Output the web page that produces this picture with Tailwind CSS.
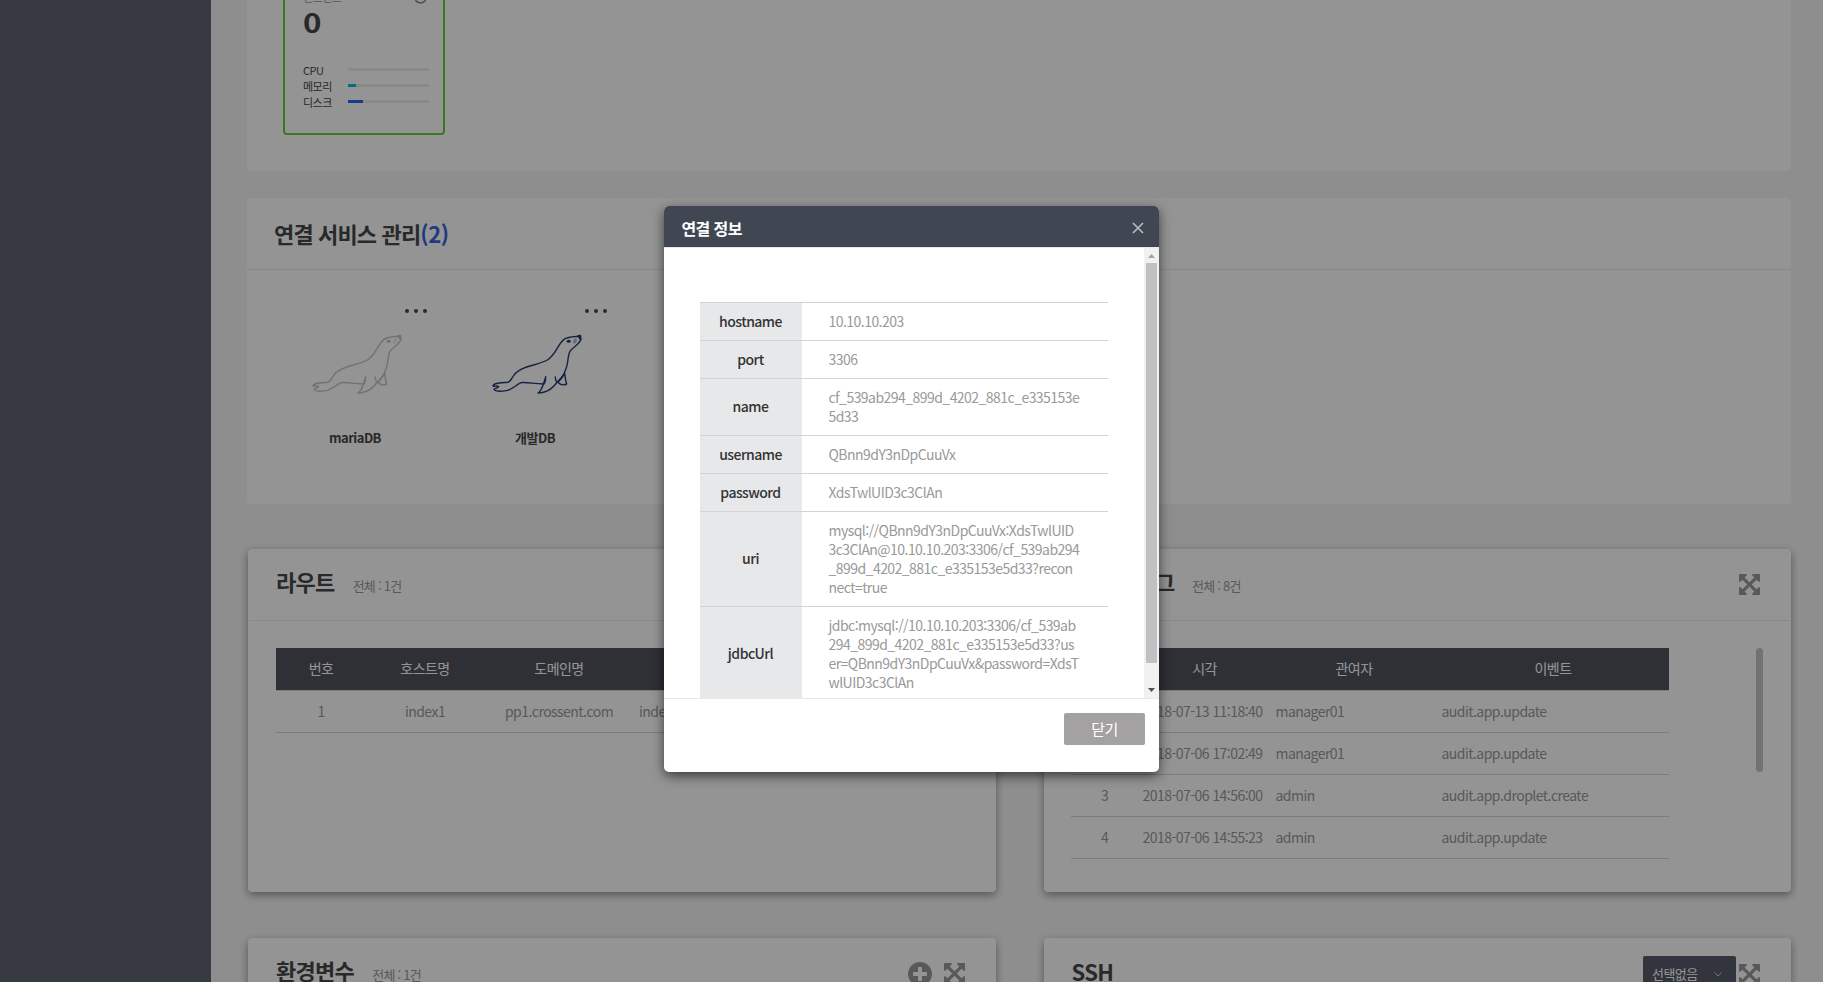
<!DOCTYPE html>
<html lang="ko">
<head>
<meta charset="utf-8">
<title>연결 정보</title>
<script src="https://cdn.jsdelivr.net/npm/@tailwindcss/browser@4"></script>
</head>
<body class="relative h-[982px] w-[1823px] overflow-hidden bg-[#f5f5f5] font-['Noto_Sans_CJK_KR',sans-serif] text-[14px] tracking-[-0.54px] text-[#484848]">
<svg class="hidden">
  <symbol id="expand" viewBox="128 128 1536 1536"><path d="M1411 541l-355 355 355 355 144-144q29-31 70-14 39 17 39 59v448q0 26-19 45t-45 19h-448q-42 0-59-40-17-39 14-69l144-144-355-355-355 355 144 144q31 30 14 69-17 40-59 40h-448q-26 0-45-19t-19-45v-448q0-42 40-59 39-17 69 14l144 144 355-355-355-355-144 144q-19 19-45 19-12 0-24-5-40-17-40-59v-448q0-26 19-45t45-19h448q42 0 59 40 17 39-14 69l-144 144 355 355 355-355-144-144q-31-30-14-69 17-40 59-40h448q26 0 45 19t19 45v448q0 42-39 59-13 5-25 5-26 0-45-19z"/></symbol>
  <symbol id="plus" viewBox="128 128 1536 1536"><path d="M1344 960v-128q0-26-19-45t-45-19h-256v-256q0-26-19-45t-45-19h-128q-26 0-45 19t-19 45v256h-256q-26 0-45 19t-19 45v128q0 26 19 45t45 19h256v256q0 26 19 45t45 19h128q26 0 45-19t19-45v-256h256q26 0 45-19t19-45zm320-64q0 209-103 385.500t-279.500 279.500-385.500 103-385.500-103-279.500-279.500-103-385.500 103-385.500 279.500-279.500 385.500-103 385.500 103 279.500 279.500 103 385.500z"/></symbol>
  <symbol id="seal" viewBox="210 160 285 186">
    <g fill="none" stroke="currentColor" stroke-width="4.200" stroke-linecap="round" stroke-linejoin="round">
      <path d="M474 170C458 171 442 171 432 179C412 195 408 225 382 241C362 252 338 256 320 262C300 269 286 279 280 289C275 297 271 305 264 308C250 309 235 309 225 313C221 315 218 317 219 319C225 321 230 317 236 321C232 327 222 326 222 330C227 336 246 335 262 332C279 328 289 315 303 309C320 307 340 312 370 313"/>
      <path d="M483 178C478 194 463 200 453 211C443 221 446 237 441 257C437 272 433 284 423 295C408 308 401 330 373 337C367 339 360 340 354 340C364 334 368 320 372 308C374 300 376 296 377 291C378 300 377 306 372 313"/>
      <path d="M406 292C406 300 408 305 411 306M434 281C436 294 436 303 440 313C430 318 420 315 413 307C419 306 425 296 434 281"/>
    </g>
    <path fill="currentColor" d="M471 168C476 164 483 164 484 168L484 180C480 184 477 174 471 171Z"/>
    <ellipse cx="446" cy="185" rx="6" ry="4.500" fill="currentColor"/>
    <ellipse cx="465" cy="184" rx="5" ry="8" fill="currentColor" opacity=".35" transform="rotate(25 465 184)"/>
  </symbol>
</svg>

<div class="flex h-full overflow-hidden">
  <aside class="w-[211px] shrink-0 bg-[#5f6471]"></aside>
  <main class="w-[1580px] pl-[36px]">
    <!-- Instances -->
    <section class="flex h-[171px] rounded-b bg-white pl-[36px]">
      <div class="mt-[-40px] h-[175px] w-[162px] rounded border-2 border-[#68cc38] pt-[15px] pl-[18px]">
        <div class="flex items-center justify-between pr-[16px] text-[11px] leading-[40px] text-[#999]"><span>인스턴스</span>
          <svg class="size-[13px]" viewBox="0 0 13 13" fill="none" stroke="#888" stroke-width="1.500"><circle cx="6.500" cy="6.500" r="5.500"/></svg></div>
        <div class="mt-[-10px] w-[18px] origin-left scale-x-[1.18] text-[26.5px] font-bold leading-[30px]">0</div>
        <div class="mt-[25px] text-[11px] leading-4">
          <div class="flex"><span class="w-[45px] shrink-0">CPU</span><span class="mt-[6px] h-[3px] w-[81px] shrink-0 bg-[#ededed]"></span></div>
          <div class="flex"><span class="w-[45px] shrink-0">메모리</span><span class="mt-[6px] h-[3px] w-[81px] shrink-0 bg-[#ededed]"><i class="block h-full w-[8px] bg-[#16b5dc]"></i></span></div>
          <div class="flex"><span class="w-[45px] shrink-0">디스크</span><span class="mt-[6px] h-[3px] w-[81px] shrink-0 bg-[#ededed]"><i class="block h-full w-[15px] bg-[#2468e8]"></i></span></div>
        </div>
      </div>
    </section>

    <!-- Connected services -->
    <section class="mt-[27px] h-[306px] rounded bg-white">
      <h2 class="h-[72px] border-b border-[#ececec] pl-[27px] text-[22px] font-bold leading-[71px] tracking-[-0.85px]">연결 서비스 관리<span class="tracking-[-0.5px] text-[#3663e0]">(2)</span></h2>
      <div class="flex pl-[18px]">
        <div class="flex w-[180px] flex-col items-center">
          <div class="mt-[39px] mr-[18px] flex gap-[5px] self-end"><i class="size-1 rounded-full bg-[#484848]"></i><i class="size-1 rounded-full bg-[#484848]"></i><i class="size-1 rounded-full bg-[#484848]"></i></div>
          <svg class="mt-[20px] ml-[5px] h-[62px] w-[95px] text-[#c4c4c4]"><use href="#seal"/></svg>
          <b class="mt-[33px] text-[13px] leading-5">mariaDB</b>
        </div>
        <div class="flex w-[180px] flex-col items-center">
          <div class="mt-[39px] mr-[18px] flex gap-[5px] self-end"><i class="size-1 rounded-full bg-[#484848]"></i><i class="size-1 rounded-full bg-[#484848]"></i><i class="size-1 rounded-full bg-[#484848]"></i></div>
          <svg class="mt-[20px] ml-[5px] h-[62px] w-[95px] text-[#253b73]"><use href="#seal"/></svg>
          <b class="mt-[33px] text-[13px] leading-5">개발DB</b>
        </div>
      </div>
    </section>

    <div class="mt-[45px] grid grid-cols-[748px_747px] gap-x-[48px] gap-y-[46px] pl-px">
      <!-- Routes -->
      <section class="h-[343px] rounded bg-white shadow-[0_3px_8px_rgba(0,0,0,0.4)]">
        <header class="mx-px flex h-[72px] border-b border-[#ececec] pl-[27px]">
          <h2 class="text-[22px] font-bold leading-[65px] tracking-[-0.7px]">라우트</h2><span class="ml-[18px] text-[13px] leading-[74px] tracking-[-0.75px] text-[#999]">전체 : 1건</span>
        </header>
        <table class="mt-[27px] ml-[28px] w-[692px] table-fixed border-collapse text-center">
          <colgroup><col class="w-[90px]"><col class="w-[118px]"><col class="w-[150px]"><col></colgroup>
          <tr class="h-[42px] bg-[#52545d] text-white"><td>번호</td><td>호스트명</td><td>도메인명</td><td>어플리케이션</td></tr>
          <tr class="h-[42px] border-y border-[#d8d8d8] text-[#999]"><td>1</td><td>index1</td><td>pp1.crossent.com</td><td class="pl-[5px] text-left">index1.pp1.crossent.com</td></tr>
        </table>
      </section>
      <!-- Event log -->
      <section class="h-[343px] rounded bg-white shadow-[0_3px_8px_rgba(0,0,0,0.4)]">
        <header class="mx-px flex h-[72px] border-b border-[#ececec] pl-[27px]">
          <h2 class="w-[102px] whitespace-nowrap text-[22px] font-bold leading-[65px] tracking-[-0.8px]">이벤트 로그</h2><span class="ml-[18px] text-[13px] leading-[74px] tracking-[-0.75px] text-[#999]">전체 : 8건</span>
          <svg class="mt-[25px] mr-[30px] ml-auto size-[21px] fill-[#999]"><use href="#expand"/></svg>
        </header>
        <div class="mt-[27px] flex justify-between pr-[28px] pl-[27px]">
          <table class="w-[598px] table-fixed border-collapse">
            <colgroup><col class="w-[67px]"><col class="w-[133px]"><col class="w-[166px]"><col></colgroup>
            <tr class="h-[42px] bg-[#52545d] text-center text-white"><td>번호</td><td>시각</td><td>관여자</td><td>이벤트</td></tr>
            <tr class="h-[42px] border-y border-[#d8d8d8] text-[#999]"><td class="text-center">1</td><td class="pl-[4.5px] whitespace-nowrap">2018-07-13 11:18:40</td><td class="pl-[4.5px]">manager01</td><td class="pl-[4.5px]">audit.app.update</td></tr>
            <tr class="h-[42px] border-y border-[#d8d8d8] text-[#999]"><td class="text-center">2</td><td class="pl-[4.5px] whitespace-nowrap">2018-07-06 17:02:49</td><td class="pl-[4.5px]">manager01</td><td class="pl-[4.5px]">audit.app.update</td></tr>
            <tr class="h-[42px] border-y border-[#d8d8d8] text-[#999]"><td class="text-center">3</td><td class="pl-[4.5px] whitespace-nowrap">2018-07-06 14:56:00</td><td class="pl-[4.5px]">admin</td><td class="pl-[4.5px]">audit.app.droplet.create</td></tr>
            <tr class="h-[42px] border-y border-[#d8d8d8] text-[#999]"><td class="text-center">4</td><td class="pl-[4.5px] whitespace-nowrap">2018-07-06 14:55:23</td><td class="pl-[4.5px]">admin</td><td class="pl-[4.5px]">audit.app.update</td></tr>
          </table>
          <div class="h-[124px] w-[7px] rounded-full bg-[#c4c4c4]"></div>
        </div>
      </section>
      <!-- Environment variables -->
      <section class="h-[343px] rounded bg-white shadow-[0_3px_8px_rgba(0,0,0,0.4)]">
        <header class="mx-px flex h-[72px] border-b border-[#ececec] pl-[27px]">
          <h2 class="text-[22px] font-bold leading-[65px] tracking-[-0.7px]">환경변수</h2><span class="ml-[18px] text-[13px] leading-[74px] tracking-[-0.75px] text-[#999]">전체 : 1건</span>
          <svg class="mt-[24px] ml-auto size-[24px] fill-[#999]"><use href="#plus"/></svg>
          <svg class="mt-[25px] mr-[30px] ml-[12px] size-[21px] fill-[#999]"><use href="#expand"/></svg>
        </header>
      </section>
      <!-- SSH -->
      <section class="h-[343px] rounded bg-white shadow-[0_3px_8px_rgba(0,0,0,0.4)]">
        <header class="mx-px flex h-[72px] border-b border-[#ececec] pl-[26.5px]">
          <h2 class="text-[22px] font-bold leading-[66px] tracking-[-0.6px]">SSH</h2>
          <div class="mt-[18px] ml-auto flex h-[36px] w-[93px] items-center justify-between rounded-[2px] bg-[#575c69] pr-[13px] pb-px pl-[9px] text-[13px] text-white">선택없음
            <svg class="size-[10px]" viewBox="0 0 10 10" fill="none" stroke="#ccc"><path d="M1.500 3.500 5 7l3.500-3.500"/></svg></div>
          <svg class="mt-[26px] mr-[30px] ml-[3px] size-[21px] fill-[#999]"><use href="#expand"/></svg>
        </header>
      </section>
    </div>
  </main>
</div>

<!-- Modal -->
<div class="absolute inset-0 flex items-start bg-black/42 pt-[206px] pl-[664px]">
  <div class="flex h-[566px] w-[495px] flex-col overflow-hidden rounded-[5px] bg-white shadow-[0_4px_12px_rgba(0,0,0,0.6)]">
    <div class="flex h-[41px] shrink-0 items-center justify-between bg-[#414752] pr-[15px] pl-[17.5px]">
      <h1 class="mt-0.5 text-[16px] font-bold leading-6 tracking-[-0.6px] text-white">연결 정보</h1>
      <svg class="mt-0.5 size-3" viewBox="0 0 12 12" fill="none" stroke="#b9bbc0" stroke-width="1.600"><path d="M1 1l10 10M11 1 1 11"/></svg>
    </div>
    <div class="flex h-[452px] shrink-0 border-y border-[#e9e9ec]">
      <div class="grow overflow-hidden pt-[54px] pl-[36px]">
        <table class="w-[408px] table-fixed border-collapse leading-[19px] text-[#999]">
          <colgroup><col class="w-[102px]"><col></colgroup>
          <tr class="border-t border-[#d3d3d3]"><th class="bg-[#e6e8ea] pr-px pb-px font-medium text-[#333]">hostname</th><td class="py-[9px] pl-[26.5px]">10.10.10.203</td></tr>
          <tr class="border-t border-[#d3d3d3]"><th class="bg-[#e6e8ea] pr-px pb-px font-medium text-[#333]">port</th><td class="py-[9px] pl-[26.5px]">3306</td></tr>
          <tr class="border-t border-[#d3d3d3]"><th class="bg-[#e6e8ea] pr-px pb-px font-medium text-[#333]">name</th><td class="py-[9px] pl-[26.5px]">cf_539ab294_899d_4202_881c_e335153e<br>5d33</td></tr>
          <tr class="border-t border-[#d3d3d3]"><th class="bg-[#e6e8ea] pr-px pb-px font-medium text-[#333]">username</th><td class="py-[9px] pl-[26.5px]">QBnn9dY3nDpCuuVx</td></tr>
          <tr class="border-t border-[#d3d3d3]"><th class="bg-[#e6e8ea] pr-px pb-px font-medium text-[#333]">password</th><td class="py-[9px] pl-[26.5px]">XdsTwlUID3c3ClAn</td></tr>
          <tr class="border-t border-[#d3d3d3]"><th class="bg-[#e6e8ea] pr-px pb-px font-medium text-[#333]">uri</th><td class="py-[9px] pl-[26.5px] whitespace-nowrap">mysql://QBnn9dY3nDpCuuVx:XdsTwlUID<br>3c3ClAn@10.10.10.203:3306/cf_539ab294<br>_899d_4202_881c_e335153e5d33?recon<br>nect=true</td></tr>
          <tr class="border-t border-[#d3d3d3]"><th class="bg-[#e6e8ea] pr-px pb-px font-medium text-[#333]">jdbcUrl</th><td class="py-[9px] pl-[26.5px] whitespace-nowrap">jdbc:mysql://10.10.10.203:3306/cf_539ab<br>294_899d_4202_881c_e335153e5d33?us<br>er=QBnn9dY3nDpCuuVx&amp;password=XdsT<br>wlUID3c3ClAn</td></tr>
        </table>
      </div>
      <div class="flex w-[15px] shrink-0 flex-col items-center bg-[#f1f1f1]">
        <svg class="h-[15px] w-[15px] shrink-0" viewBox="0 0 15 15"><path fill="#a3a3a3" d="M4 10 7.500 6 11 10Z"/></svg>
        <div class="h-[400px] w-[11px] shrink-0 bg-[#c1c1c1]"></div>
        <svg class="mt-auto h-[15px] w-[15px] shrink-0" viewBox="0 0 15 15"><path fill="#505050" d="M4 5 7.500 9 11 5Z"/></svg>
      </div>
    </div>
    <div class="flex justify-end pt-[14px] pr-[14px]">
      <button class="h-[32px] w-[81px] rounded-[2px] bg-[#a3a1a2] text-[15px] leading-[32px] text-white">닫기</button>
    </div>
  </div>
</div>
</body>
</html>
